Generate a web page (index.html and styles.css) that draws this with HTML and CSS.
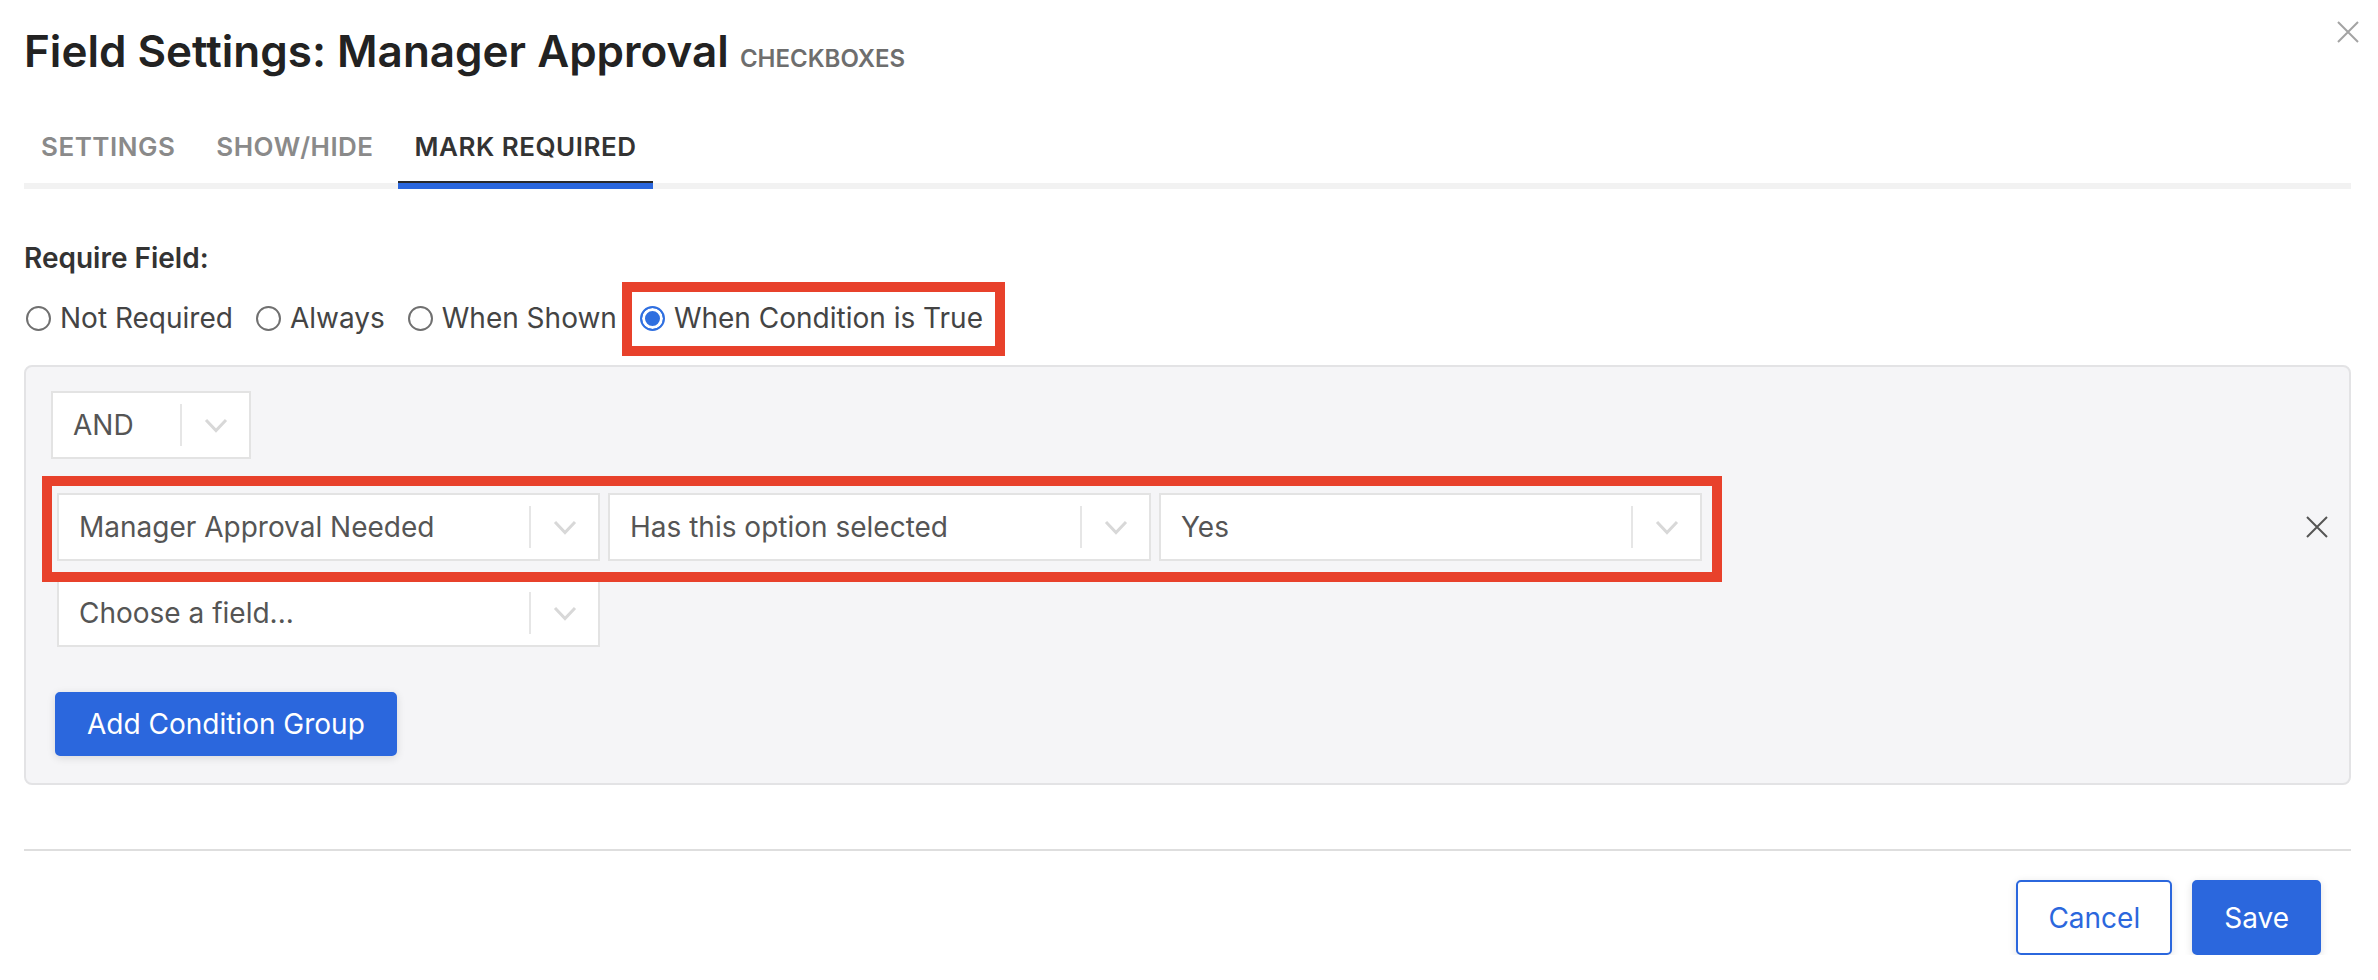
FILE: index.html
```html
<!DOCTYPE html>
<html lang="en">
<head>
<meta charset="UTF-8">
<meta name="viewport" content="width=device-width, initial-scale=1.0">
<title>Field Settings: Manager Approval</title>
<link rel="stylesheet" href="styles.css">
</head>
<body>
<div class="dialog">
    <div class="dialog-header">
        <h1 class="dialog-title">Field Settings: Manager Approval <span class="field-type">Checkboxes</span></h1>
        <button class="close-btn" aria-label="Close">
            <svg viewBox="0 0 22 22" width="22" height="22"><path d="M1 1L21 21M21 1L1 21" stroke="#a3a3a3" stroke-width="2" fill="none"/></svg>
        </button>
    </div>

    <div class="tabs">
        <div class="tab">Settings</div>
        <div class="tab">Show/Hide</div>
        <div class="tab active">Mark Required</div>
    </div>

    <div class="require-label">Require Field:</div>
    <div class="radio-row">
        <label class="radio"><input type="radio" name="required"> Not Required</label>
        <label class="radio"><input type="radio" name="required"> Always</label>
        <label class="radio"><input type="radio" name="required"> When Shown</label>
        <label class="radio marked"><input type="radio" name="required" checked> When Condition is True</label>
    </div>

    <div class="condition-panel">
        <div class="select select-small">
            <span class="select-value">AND</span>
            <span class="select-sep"></span>
            <span class="select-arrow"><svg viewBox="0 0 24 15" width="24" height="15"><path d="M2 2L12 12.5L22 2" stroke="#d8d8d8" stroke-width="3" fill="none"/></svg></span>
        </div>

        <div class="condition-group">
            <div class="condition-row">
                <div class="condition-fields marked">
                    <div class="select">
                        <span class="select-value">Manager Approval Needed</span>
                        <span class="select-sep"></span>
                        <span class="select-arrow"><svg viewBox="0 0 24 15" width="24" height="15"><path d="M2 2L12 12.5L22 2" stroke="#d8d8d8" stroke-width="3" fill="none"/></svg></span>
                    </div>
                    <div class="select">
                        <span class="select-value">Has this option selected</span>
                        <span class="select-sep"></span>
                        <span class="select-arrow"><svg viewBox="0 0 24 15" width="24" height="15"><path d="M2 2L12 12.5L22 2" stroke="#d8d8d8" stroke-width="3" fill="none"/></svg></span>
                    </div>
                    <div class="select">
                        <span class="select-value">Yes</span>
                        <span class="select-sep"></span>
                        <span class="select-arrow"><svg viewBox="0 0 24 15" width="24" height="15"><path d="M2 2L12 12.5L22 2" stroke="#d8d8d8" stroke-width="3" fill="none"/></svg></span>
                    </div>
                </div>
                <button class="remove-btn" aria-label="Remove condition">
                    <svg viewBox="0 0 22 22" width="22" height="22"><path d="M1 1L21 21M21 1L1 21" stroke="#555" stroke-width="2" fill="none"/></svg>
                </button>
            </div>
            <div class="condition-row">
                <div class="select">
                    <span class="select-value">Choose a field...</span>
                    <span class="select-sep"></span>
                    <span class="select-arrow"><svg viewBox="0 0 24 15" width="24" height="15"><path d="M2 2L12 12.5L22 2" stroke="#d8d8d8" stroke-width="3" fill="none"/></svg></span>
                </div>
            </div>
        </div>

        <button class="btn btn-primary add-group">Add Condition Group</button>
    </div>

    <div class="dialog-footer">
        <button class="btn btn-outline">Cancel</button>
        <button class="btn btn-primary">Save</button>
    </div>
</div>
</body>
</html>
```

FILE: styles.css
```css
body {
    margin: 0;
    font-family: Inter, "Noto Sans", sans-serif;
    color: #444;
    background: #fff;
}
.dialog {
    padding: 25px 27px 0 24px;
}
.dialog-header {
    display: flex;
    justify-content: space-between;
    align-items: flex-start;
}
.dialog-title {
    margin: 0;
    font-size: 44px;
    line-height: 52px;
    font-weight: 600;
    color: #222;
}
.field-type {
    font-size: 24px;
    font-weight: 600;
    color: #6e6e6e;
    text-transform: uppercase;
}
.close-btn, .remove-btn {
    background: none;
    border: 0;
    padding: 0;
    width: 22px;
    height: 22px;
    cursor: pointer;
}
.close-btn {
    margin: -4px -8px 0 0;
}

/* tab strip */
.tabs {
    display: flex;
    gap: 7px;
    margin-top: 26px;
    border-bottom: 6px solid #f2f2f2;
}
.tab {
    padding: 20px 17px;
    font-size: 26px;
    line-height: 32px;
    font-weight: 600;
    letter-spacing: 0.5px;
    text-transform: uppercase;
    color: #8a8a8a;
    margin-bottom: -6px;
    border-bottom: 6px solid transparent;
}
.tab.active {
    color: #333;
    border-bottom-color: #2b67dd;
    box-shadow: inset 0 -2px 0 #2a2a2a;
}

.require-label {
    margin-top: 53px;
    font-size: 28px;
    line-height: 32px;
    font-weight: 600;
    color: #333;
}
.radio-row {
    display: flex;
    gap: 21px;
    margin-top: 24px;
    font-size: 28px;
    line-height: 40px;
}
.radio {
    position: relative;
    display: flex;
    align-items: center;
    gap: 9px;
}
.radio input {
    appearance: none;
    -webkit-appearance: none;
    width: 25px;
    height: 25px;
    margin: 0 0 0 2px;
    border: 2px solid #707070;
    border-radius: 50%;
    background: #fff;
}
.radio input:checked {
    border-color: #2f6fe0;
    background: #2f6fe0;
    box-shadow: inset 0 0 0 3px #fff;
}

/* red callout frames */
.marked::after {
    content: "";
    position: absolute;
    border: 10px solid #e8412b;
    pointer-events: none;
}
.radio.marked::after {
    left: -16px;
    right: -22px;
    top: -16px;
    bottom: -18px;
}

.condition-panel {
    margin-top: 27px;
    border: 2px solid #e3e3e5;
    border-radius: 8px;
    background: #f5f5f7;
    padding: 24px 25px 27px 25px;
}
.select {
    display: flex;
    align-items: center;
    box-sizing: border-box;
    width: 543px;
    height: 68px;
    border: 2px solid #e3e3e3;
    background: #fff;
}
.select-small {
    width: 200px;
}
.select-value {
    flex: 1;
    padding-left: 20px;
    font-size: 28px;
    color: #555;
    white-space: nowrap;
}
.select-sep {
    width: 2px;
    height: 42px;
    background: #e6e6e6;
}
.select-arrow {
    width: 67px;
    display: flex;
    justify-content: center;
}
.condition-group {
    margin-top: 34px;
    padding-left: 6px;
}
.condition-row {
    display: flex;
    align-items: center;
}
.condition-row + .condition-row {
    margin-top: 18px;
}
.condition-fields {
    position: relative;
    display: flex;
    gap: 8px;
}
.condition-fields.marked::after {
    left: -15px;
    right: -20px;
    top: -17px;
    bottom: -21px;
}
.remove-btn {
    margin-left: auto;
    margin-right: -4px;
}

.btn {
    box-sizing: border-box;
    font-family: inherit;
    font-size: 28px;
    border: 2px solid #2b67dd;
    border-radius: 5px;
    padding: 0 30px;
    box-shadow: 0 2px 8px rgba(0, 0, 0, 0.12);
    cursor: pointer;
}
.btn-primary {
    background: #2b67dd;
    color: #fff;
}
.btn-outline {
    background: #fff;
    color: #2b67dd;
}
.add-group {
    margin: 45px 0 0 4px;
    height: 64px;
}
.dialog-footer {
    display: flex;
    justify-content: flex-end;
    gap: 20px;
    margin-top: 64px;
    padding: 29px 30px 0 0;
    border-top: 2px solid #dedede;
}
.dialog-footer .btn {
    height: 75px;
}
```
